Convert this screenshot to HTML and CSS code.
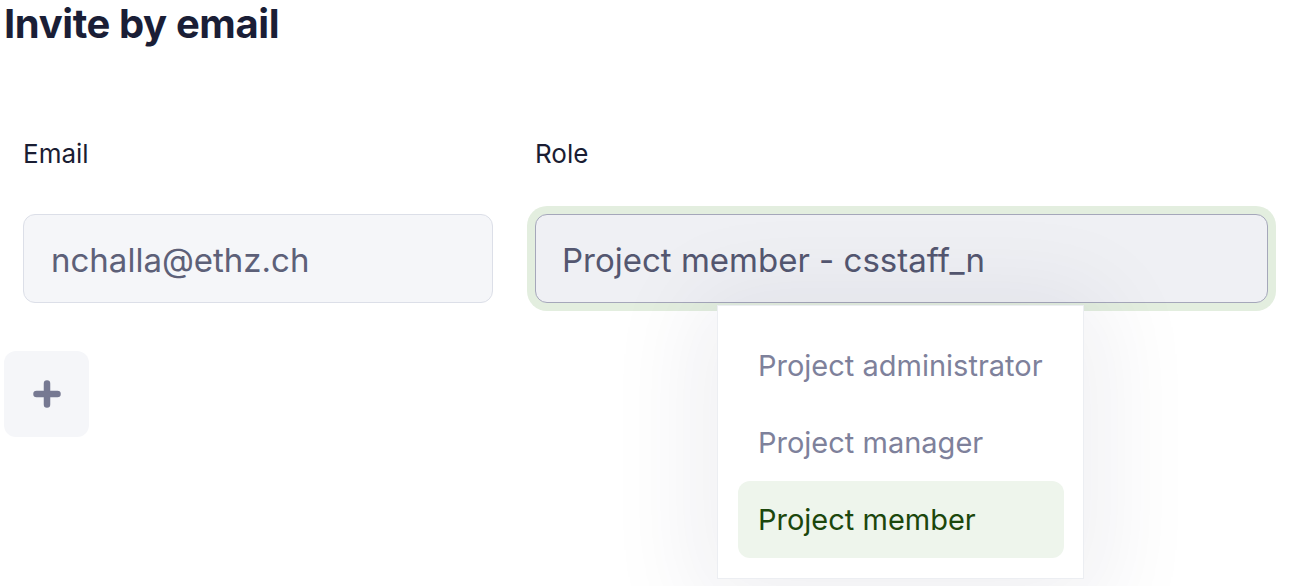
FILE: index.html
```html
<!DOCTYPE html>
<html lang="en">
<head>
<meta charset="utf-8">
<title>Invite by email</title>
<link rel="stylesheet" href="styles.css">
</head>
<body>
<main class="page">
  <h1 class="title">Invite by email</h1>
  <div class="fields">
    <div class="field field-email">
      <label class="label">Email</label>
      <div class="input">nchalla@ethz.ch</div>
    </div>
    <div class="field field-role">
      <label class="label">Role</label>
      <div class="select-wrap">
        <div class="select">Project member - csstaff_n</div>
        <ul class="menu">
          <li class="option">Project administrator</li>
          <li class="option">Project manager</li>
          <li class="option selected">Project member</li>
        </ul>
      </div>
    </div>
  </div>
  <button class="add" type="button" aria-label="Add">
    <svg width="28" height="28" viewBox="0 0 28 28"><path d="M14 3.5v21M3.5 14h21" stroke="#767992" stroke-width="6.5" stroke-linecap="round" fill="none"/></svg>
  </button>
</main>
</body>
</html>
```
FILE: styles.css
```css
* { box-sizing: border-box; }
html, body { margin: 0; padding: 0; background: #ffffff; }
body {
  font-family: Inter, "Noto Sans", "Liberation Sans", sans-serif;
  color: #1b1f38;
  width: 1296px;
  height: 586px;
  overflow: hidden;
}
.page {
  display: flex;
  flex-direction: column;
  align-items: flex-start;
  padding-left: 4px;
}
.title {
  margin: 0;
  font-size: 40px;
  line-height: 48px;
  font-weight: 700;
  color: #1a1e36;
  letter-spacing: -0.4px;
}
.fields {
  display: flex;
  gap: 42px;
  margin-top: 90px;
  padding-left: 19px;
}
.field {
  display: flex;
  flex-direction: column;
  gap: 44px;
}
.field-email { width: 470px; }
.field-role { width: 733px; }
.label {
  font-size: 26px;
  line-height: 32px;
  color: #1a1d33;
}
.input, .select {
  height: 89px;
  border-radius: 12px;
  display: flex;
  align-items: center;
  padding-top: 2px;
  font-size: 33px;
}
.input {
  padding-left: 27px;
  background: #f5f6f9;
  border: 1.5px solid #dcdfe8;
  color: #5d6078;
}
.select-wrap { position: relative; }
.select {
  padding-left: 26px;
  background: #eff0f4;
  border: 1.5px solid #a5a7ba;
  color: #545770;
  box-shadow: 0 0 0 8px #e3eedf;
}
.menu {
  position: absolute;
  top: 91px;
  left: 182px;
  width: 367px;
  margin: 0;
  padding: 21px 19px 20px 20px;
  list-style: none;
  background: #ffffff;
  border: 1px solid #eceef2;
  box-shadow: 0 10px 90px 20px rgba(30, 35, 70, 0.07);
  z-index: 2;
}
.option {
  height: 77px;
  display: flex;
  align-items: center;
  padding-left: 20px;
  font-size: 29px;
  color: #7e819b;
  border-radius: 12px;
}
.option.selected {
  background: #eef5ec;
  color: #1c470c;
}
.add {
  margin-top: 48px;
  width: 85px;
  height: 86px;
  border: none;
  border-radius: 12px;
  background: #f5f6f9;
  display: flex;
  align-items: center;
  justify-content: center;
  padding: 0;
}
.add svg { display: block; }
```
